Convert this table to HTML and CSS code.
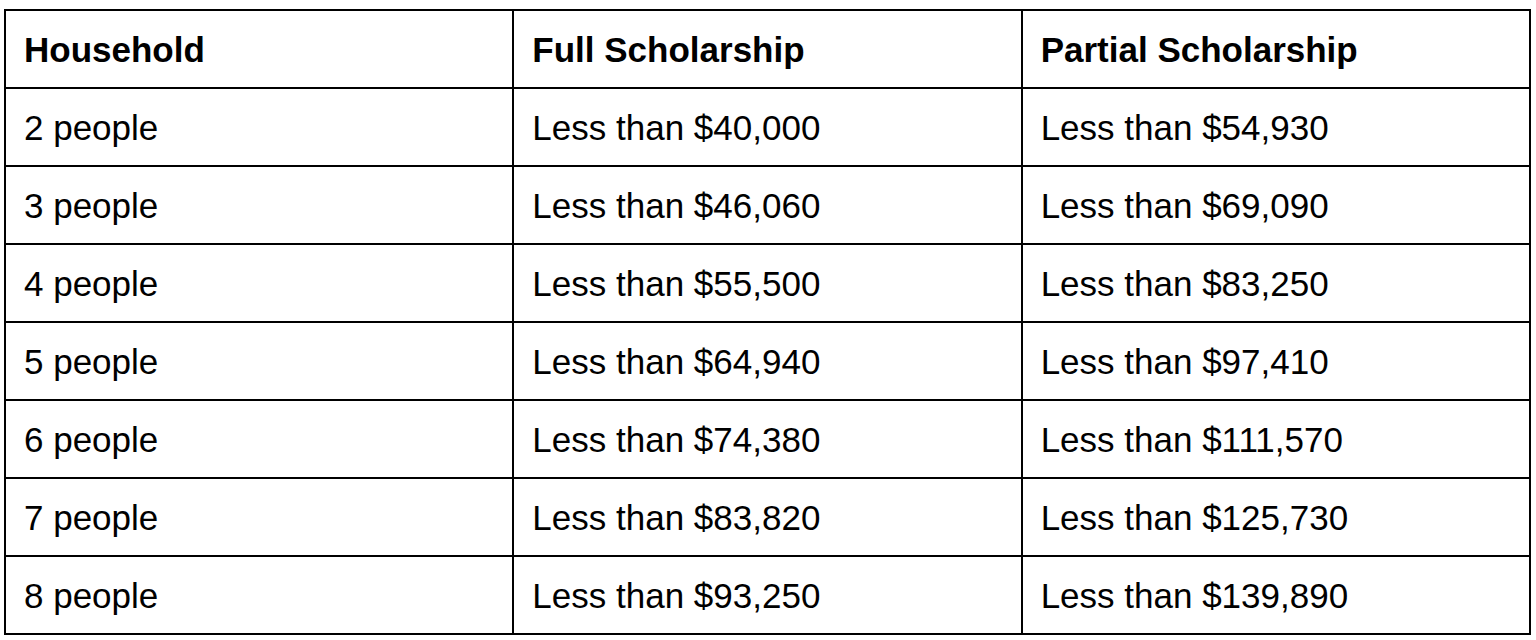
FILE: index.html
```html
<!DOCTYPE html>
<html lang="en">
<head>
<meta charset="utf-8">
<title>Scholarship Income Limits</title>
<link rel="stylesheet" href="styles.css">
</head>
<body>
<table class="limits">
  <thead>
    <tr>
      <th>Household</th>
      <th>Full Scholarship</th>
      <th>Partial Scholarship</th>
    </tr>
  </thead>
  <tbody>
    <tr><td>2 people</td><td>Less than $40,000</td><td>Less than $54,930</td></tr>
    <tr><td>3 people</td><td>Less than $46,060</td><td>Less than $69,090</td></tr>
    <tr><td>4 people</td><td>Less than $55,500</td><td>Less than $83,250</td></tr>
    <tr><td>5 people</td><td>Less than $64,940</td><td>Less than $97,410</td></tr>
    <tr><td>6 people</td><td>Less than $74,380</td><td>Less than $111,570</td></tr>
    <tr><td>7 people</td><td>Less than $83,820</td><td>Less than $125,730</td></tr>
    <tr><td>8 people</td><td>Less than $93,250</td><td>Less than $139,890</td></tr>
  </tbody>
</table>
</body>
</html>
```
FILE: styles.css
```css
html, body {
  margin: 0;
  padding: 0;
  background: #fff;
}

body {
  padding: 9px 0 0 4px;
  font-family: "Liberation Sans", Arial, sans-serif;
  color: #000;
}

.limits {
  border-collapse: collapse;
  width: 1527px;
  table-layout: fixed;
}

.limits th,
.limits td {
  border: 2px solid #000;
  height: 78px;
  padding: 2px 18px 0;
  font-size: 35px;
  line-height: 40px;
  text-align: left;
  vertical-align: middle;
  box-sizing: border-box;
}

.limits th {
  font-weight: bold;
}
```
